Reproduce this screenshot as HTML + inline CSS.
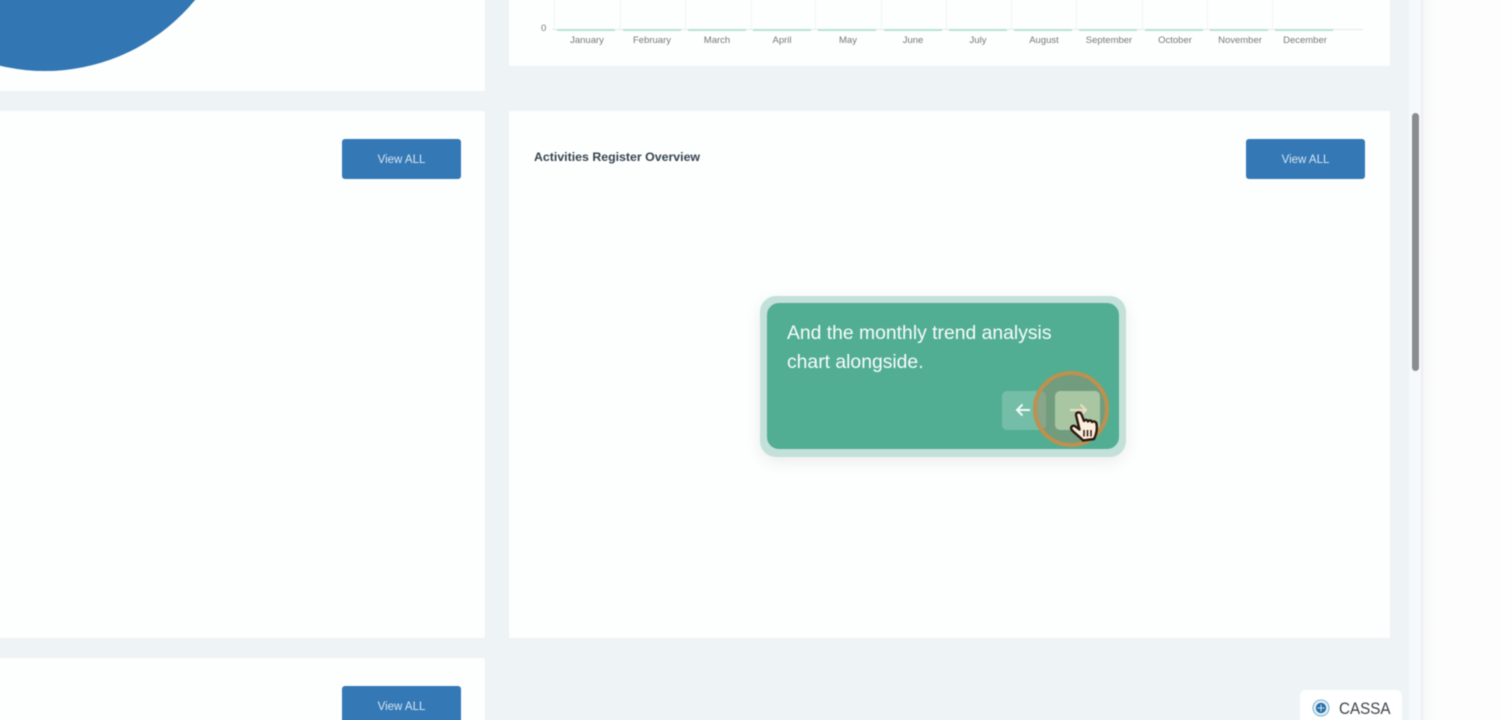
<!DOCTYPE html>
<html>
<head>
<meta charset="utf-8">
<style>
html,body{margin:0;padding:0;width:1512px;height:720px;overflow:hidden;background:#eef3f6}
#w{position:relative;width:1512px;height:720px;overflow:hidden;background:#eef3f6;font-family:"Liberation Sans",sans-serif}
#i{position:absolute;left:0;top:0;width:1512px;height:720px;filter:blur(.4px)}
.a{position:absolute}
.card{position:absolute;background:#fdfefe}
.btn{position:absolute;width:119px;height:39.500px;background:#3478b5;border-radius:3px;color:#d5e6f3;font-size:11.500px;line-height:42px;text-align:center}
.m{position:absolute;top:35px;font-size:9.500px;line-height:11px;color:#777;width:64px;text-align:center}
.g{position:absolute;top:-4px;width:1px;height:33px;background:#f3f5f5}
.b{position:absolute;top:29px;width:58px;height:2px;background:#b8e2d6}
</style>
</head>
<body>
<div id="w"><div id="i">
<div class="card" style="left:-6px;top:-6px;width:491px;height:97px;overflow:hidden">
  <div class="a" style="left:-143px;top:-311px;width:388px;height:388px;border-radius:50%;background:#3276b3"></div>
</div>
<div class="card" style="left:509px;top:-6px;width:881px;height:72px"></div>
<div class="card" style="left:-6px;top:111px;width:491px;height:527px"></div>
<div class="card" style="left:509px;top:111px;width:881px;height:527px"></div>
<div class="card" style="left:-6px;top:658px;width:491px;height:70px"></div>

<div class="a" style="left:541px;top:23px;font-size:9.500px;line-height:11px;color:#777">0</div>
<div class="a" style="left:552px;top:29px;width:811px;height:1px;background:#e6eaea"></div>
<div class="g" style="left:554px"></div><div class="g" style="left:620px"></div><div class="g" style="left:685px"></div><div class="g" style="left:751px"></div><div class="g" style="left:815px"></div><div class="g" style="left:881px"></div><div class="g" style="left:946px"></div><div class="g" style="left:1011px"></div><div class="g" style="left:1076px"></div><div class="g" style="left:1142px"></div><div class="g" style="left:1207px"></div><div class="g" style="left:1272px"></div>
<div class="b" style="left:557px"></div><div class="b" style="left:623px"></div><div class="b" style="left:688px"></div><div class="b" style="left:753px"></div><div class="b" style="left:818px"></div><div class="b" style="left:884px"></div><div class="b" style="left:949px"></div><div class="b" style="left:1014px"></div><div class="b" style="left:1079px"></div><div class="b" style="left:1145px"></div><div class="b" style="left:1210px"></div><div class="b" style="left:1275px"></div>
<div class="m" style="left:555px">January</div><div class="m" style="left:620px">February</div><div class="m" style="left:685px">March</div><div class="m" style="left:750px">April</div><div class="m" style="left:816px">May</div><div class="m" style="left:881px">June</div><div class="m" style="left:946px">July</div><div class="m" style="left:1012px">August</div><div class="m" style="left:1077px">September</div><div class="m" style="left:1143px">October</div><div class="m" style="left:1208px">November</div><div class="m" style="left:1273px">December</div>

<div class="btn" style="left:342px;top:139px">View ALL</div>
<div class="btn" style="left:1246px;top:139px">View ALL</div>
<div class="btn" style="left:342px;top:686px">View ALL</div>

<div class="a" style="left:534px;top:149px;font-size:12.350px;line-height:16px;font-weight:bold;color:#35444f;white-space:nowrap">Activities Register Overview</div>

<div class="a" style="left:1409px;top:-6px;width:14px;height:732px;background:#f6f9fa"></div>
<div class="a" style="left:1421px;top:-6px;width:2px;height:732px;background:#eceeef"></div>
<div class="a" style="left:1423px;top:-6px;width:95px;height:732px;background:linear-gradient(90deg,#f6f7f7,#fdfdfd 14px,#fefefe)"></div>
<div class="a" style="left:1412px;top:113px;width:7px;height:258px;border-radius:4px;background:#8a8d8e"></div>

<!-- tooltip -->
<div class="a" style="left:760px;top:296px;width:366px;height:161px;border-radius:16px;background:#c3e1d8;box-shadow:0 5px 16px rgba(0,0,0,.07)"></div>
<div class="a" style="left:767px;top:303px;width:352px;height:146px;border-radius:12px;background:#52ae93"></div>
<div class="a" style="left:787px;top:319px;font-size:19.350px;line-height:28.500px;color:#f8fcfa;white-space:nowrap">And the monthly trend analysis<br>chart alongside.</div>
<div class="a" style="left:1002px;top:391px;width:44px;height:39px;border-radius:5px;background:#74bda7"></div>
<div class="a" style="left:1033px;top:371px;width:76px;height:76px;border-radius:50%;background:rgba(170,125,90,.36)"></div>
<div class="a" style="left:1055px;top:391px;width:45px;height:39px;border-radius:5px;background:#a8c6a2"></div>
<div class="a" style="left:1033px;top:371px;width:76px;height:76px;box-sizing:border-box;border-radius:50%;border:4px solid #bd914f"></div>
<svg class="a" style="left:1002px;top:391px" width="100" height="40" viewBox="0 0 100 40" fill="none">
  <path d="M28 19H15M20.500 13.500L15 19L20.500 24.500" stroke="#f3faf7" stroke-width="2"/>
  <path d="M68 19H84M78.500 13.500L84 19L78.500 24.500" stroke="#efdcc4" stroke-width="2"/>
</svg>
<svg class="a" style="left:1068px;top:409px" width="32" height="34" viewBox="0 0 32 34">
  <path d="M8 6C7.500 3 12.500 2.500 13.500 5.500L16 12C16.500 10.500 19.500 10.500 20 12.500C20.500 11 23.500 11 24 13C25 12 28 12.500 28.500 14.500C29.500 20 28.500 25 26 30L15 31.500C12 27.500 7 25 3.500 20.500C2 18 5 15.500 7.500 17.500L11.500 20.500Z" fill="#fdeedd" stroke="#2a1a12" stroke-width="2.400" stroke-linejoin="round"/>
  <path d="M16 21V27.500M19.500 21V27.500M23 21V27.500" stroke="#2a1a12" stroke-width="1.500"/>
</svg>

<!-- CASSA -->
<div class="a" style="left:1300px;top:690px;width:102px;height:40px;border-radius:6px;background:#fff"></div>
<svg class="a" style="left:1312px;top:699px" width="18" height="18" viewBox="0 0 18 18">
  <circle cx="9" cy="9" r="8" fill="#e8f1f6" stroke="#74b2d2" stroke-width="1"/>
  <circle cx="9" cy="9" r="5.200" fill="#2470a8"/>
  <path d="M9 5.500V12.500M5.500 9H12.500" stroke="#cfe3ef" stroke-width="1"/>
</svg>
<div class="a" style="left:1339px;top:698px;font-size:17px;line-height:22px;color:#3f4448;transform:scaleX(.895);transform-origin:left top;white-space:nowrap">CASSA</div>
</div></div>
</body>
</html>
